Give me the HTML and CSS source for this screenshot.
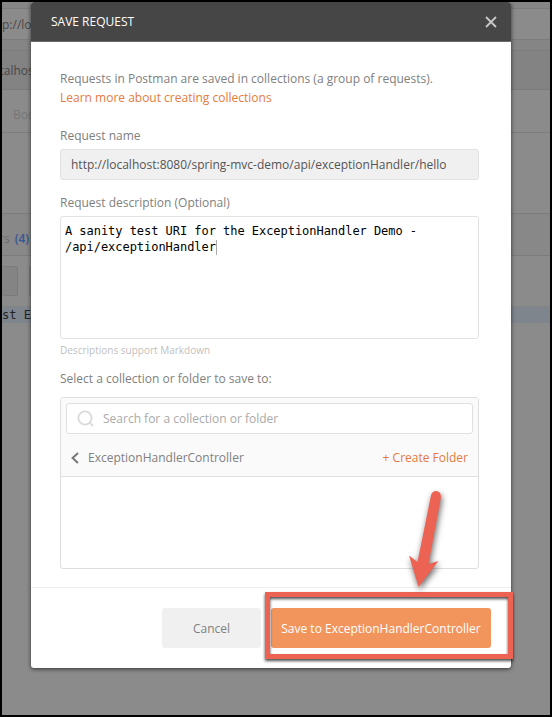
FILE: index.html
```html
<!DOCTYPE html>
<html lang="en">
<head>
<meta charset="utf-8">
<title>Save Request</title>
<link rel="stylesheet" href="styles.css">
</head>
<body>
<div class="window">
  <div class="backdrop">
    <div class="row row-top"></div>
    <div class="row row-url">p://loc</div>
    <div class="row row-gap"></div>
    <div class="row row-address"><span>calhost</span></div>
    <div class="row row-tabs">Bod</div>
    <div class="row row-blank"></div>
    <div class="row row-response"><span>rs</span><b>(4)</b></div>
    <div class="row row-tools"><i class="tool"></i><i class="tool"></i></div>
    <div class="row row-code">st Ex</div>
  </div>
  <div class="modal">
    <header class="modal-header">
      <span class="title">SAVE REQUEST</span>
      <svg class="close" viewBox="0 0 12 12"><path d="M1 1L11 11M11 1L1 11"/></svg>
    </header>
    <main class="modal-body">
      <p class="intro"><span class="intro-text">Requests in Postman are saved in collections (a group of requests).</span><br><a class="link">Learn more about creating collections</a></p>
      <div class="label"><span>Request name</span></div>
      <div class="name-input"><span>http://localhost:8080/spring-mvc-demo/api/exceptionHandler/hello</span></div>
      <div class="label label-desc"><span>Request description (Optional)</span></div>
      <div class="description">A sanity test URI for the ExceptionHandler Demo -<br>/api/exceptionHandler<i class="caret"></i></div>
      <div class="hint">Descriptions support Markdown</div>
      <div class="label label-select"><span>Select a collection or folder to save to:</span></div>
      <section class="picker">
        <div class="picker-head">
          <div class="search">
            <svg class="search-icon" viewBox="0 0 18 18"><circle cx="8" cy="8" r="6.6"/><path d="M12.5 12.5L16 16"/></svg>
            <span>Search for a collection or folder</span>
          </div>
          <div class="crumb">
            <svg class="back" viewBox="0 0 8 12"><path d="M7 1L1.6 6L7 11"/></svg>
            <span class="crumb-name">ExceptionHandlerController</span>
            <a class="link">+ Create Folder</a>
          </div>
        </div>
      </section>
    </main>
    <footer class="modal-footer">
      <div class="button cancel">Cancel</div>
      <div class="button save">Save to ExceptionHandlerController</div>
    </footer>
  </div>
  <div class="highlight"></div>
  <svg class="arrow" viewBox="0 0 60 120"><path d="M32 17.500Q33 13 37 13Q42 13.500 42 19L29.500 86L39.500 83L19.500 109L10 77.500L18.500 84Z"/></svg>
</div>
</body>
</html>
```

FILE: styles.css
```css
* { box-sizing: border-box; }
body { margin: 0; font: 12px "Open Sans", sans-serif; color: #808080; }
.window {
  position: relative; width: 552px; height: 717px; overflow: hidden;
  border: 2px solid #000; background: #8b8b8b;
}

/* dimmed application behind the dialog */
.backdrop { position: absolute; inset: 0; color: #484848; }
.row { border-bottom: 1px solid #7c7c7c; white-space: nowrap; overflow: hidden; }
.row-top { height: 7px; background: #868686; }
.row-url { height: 31px; line-height: 31px; }
.row-gap { height: 11px; background: #858585; }
.row-address { height: 39px; line-height: 40px; background: #838383; }
.row-address span { margin-left: -4px; }
.row-tabs { height: 43px; line-height: 50px; padding-left: 11px; color: #777; }
.row-blank { height: 81px; }
.row-response { height: 42px; line-height: 49px; background: #888; display: flex; gap: 5px; color: #6d6d6d; }
.row-response span { margin-left: -3px; }
.row-response b { font-weight: 600; color: #355795; }
.row-tools { height: 51px; display: flex; gap: 11px; padding-top: 10px; border-bottom-color: #838383; }
.tool { width: 60px; height: 30px; border: 1px solid #7b7b7b; border-radius: 2px; background: #848484; }
.tool:first-child { width: 16px; border-left: 0; }
.row-code { height: 16px; line-height: 16px; background: #7f858d; border: 0; font-family: "DejaVu Sans Mono", monospace; color: #222; }

.modal {
  position: relative; width: 480px; height: 666px; margin-left: 29px;
  display: flex; flex-direction: column; background: #fff;
  border-radius: 3px; box-shadow: 0 1px 4px rgba(0,0,0,.65);
}
.modal-header {
  height: 40px; padding: 0 14px 0 20px; display: flex; align-items: center; justify-content: space-between;
  background: #464646; border-bottom: 1px solid #6a6a6a; border-radius: 3px 3px 0 0; color: #fff;
}
.close { width: 12px; height: 12px; fill: none; stroke: #c8c8c8; stroke-width: 1.8; }
.modal-body { height: 545px; padding: 27px 32px 0 29px; display: flex; flex-direction: column; }
.intro { margin: 0 0 20px; line-height: 19px; white-space: nowrap; }
.link { color: #e57b3c; }
.label { line-height: 18px; margin-bottom: 4px; }
.name-input {
  height: 31px; line-height: 30px; padding-left: 10px; margin-bottom: 14px; color: #555;
  background: #f0f0f0; border: 1px solid #e2e2e2; border-radius: 3px; white-space: nowrap;
}
.description {
  height: 123px; padding: 6px 4px; margin-bottom: 3px; line-height: 16px; white-space: nowrap; color: #000;
  font-family: "DejaVu Sans Mono", monospace; letter-spacing: -.04px;
  border: 1px solid #e2e2e2; border-radius: 3px;
}
.caret { display: inline-block; width: 1px; height: 15px; background: #aaa; vertical-align: -4px; }
.hint { font-size: 10px; line-height: 16px; color: #bfbfbf; margin-bottom: 12px; }
.label-select { margin-bottom: 9px; }
.picker { height: 172px; border: 1px solid #dedede; border-radius: 3px; }
.picker-head { height: 79px; padding: 5px; background: #fafafa; border-bottom: 1px solid #e0e0e0; }
.search {
  height: 31px; padding-left: 10px; display: flex; align-items: center; gap: 8px; color: #aaa;
  background: #fff; border: 1px solid #e0e0e0; border-radius: 3px;
}
.search-icon { width: 18px; height: 18px; fill: none; stroke: #dadada; stroke-width: 1.8; }
.crumb { height: 47px; display: flex; align-items: center; padding: 0 5px; }
.back { width: 8px; height: 12px; margin-right: 9px; fill: none; stroke: #777; stroke-width: 2; }
.crumb .link { margin-left: auto; }
.modal-footer {
  flex: 1; display: flex; justify-content: flex-end; gap: 10px; padding: 20px 20px 0 0;
  border-top: 1px solid #eee;
}
.button { height: 40px; line-height: 41px; text-align: center; border-radius: 3px; white-space: nowrap; }
.cancel { width: 99px; background: #f0f0f0; }
.save { width: 220px; background: #f1955c; color: #fff; }

/* annotations */
.highlight {
  position: absolute; left: 263px; top: 590px; width: 248px; height: 67px; border: 5px solid #ec6354;
  filter: drop-shadow(0 2px 1.500px rgba(0,0,0,.7));
}
.arrow {
  position: absolute; left: 397px; top: 476px; width: 60px; height: 120px; fill: #ec6354;
  filter: drop-shadow(1px 3px 3px rgba(0,0,0,.6));
}
```
